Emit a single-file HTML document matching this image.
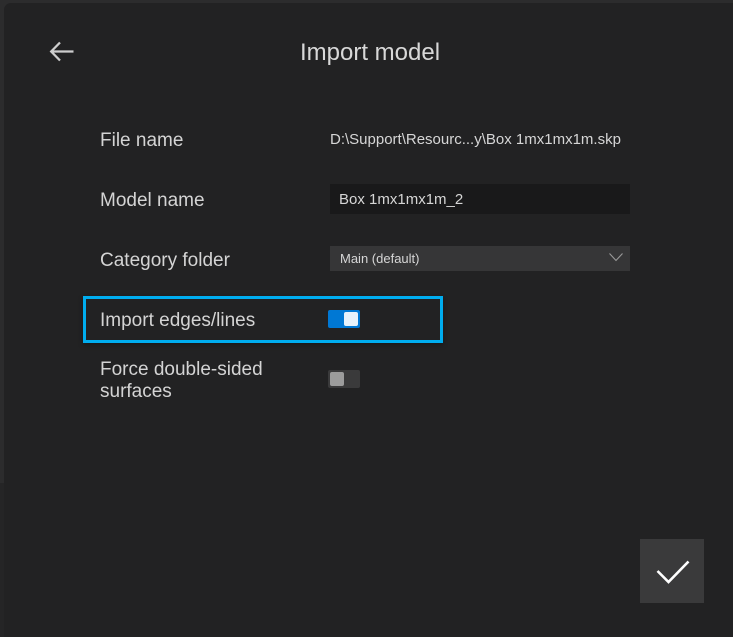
<!DOCTYPE html>
<html>
<head>
<meta charset="utf-8">
<style>
html,body{margin:0;padding:0;}
body{width:733px;height:637px;overflow:hidden;background:#2c2c2d;position:relative;font-family:"Liberation Sans",sans-serif;color:#d6d6d6;}
.panel{position:absolute;left:4px;top:3px;width:729px;height:634px;background:#222223;border-top-left-radius:7px;}
.strip{position:absolute;left:0;top:483px;width:4px;height:154px;background:#252526;}
.t{position:absolute;white-space:nowrap;}
.label{font-size:19px;line-height:22px;left:100px;color:#d4d4d4;}
.input{position:absolute;left:330px;top:184px;width:300px;height:30px;background:#19191a;}
.select{position:absolute;left:330px;top:246px;width:300px;height:25px;background:#363637;}
.focus{position:absolute;left:83px;top:296px;width:354px;height:41px;border:3px solid #00adef;box-shadow:0 2px 5px rgba(0,0,0,.3);}
.sw{position:absolute;left:328px;width:32px;height:18px;border-radius:2px;}
.knob{position:absolute;top:2px;width:14px;height:14px;border-radius:2px;}
.ok{position:absolute;left:640px;top:539px;width:64px;height:64px;background:#3a3a3b;}
svg{position:absolute;display:block;}
</style>
</head>
<body>
<div class="strip"></div>
<div class="panel"></div>

<svg style="left:48px;top:40px" width="28" height="24" viewBox="0 0 28 24">
<path d="M25.5 11.5H4 M12 2.5L3.2 11.5L12 20.5" fill="none" stroke="#cdcdcd" stroke-width="2.3"/>
</svg>
<div class="t" style="left:300px;top:39px;font-size:24px;line-height:28px;color:#d8d8d8;">Import model</div>

<div class="t label" style="top:130px;">File name</div>
<div class="t" style="left:330px;top:131px;font-size:15px;line-height:18px;color:#d6d6d6;">D:\Support\Resourc...y\Box 1mx1mx1m.skp</div>

<div class="t label" style="top:190px;">Model name</div>
<div class="input"></div>
<div class="t" style="left:339px;top:191px;font-size:15px;line-height:18px;color:#d6d6d6;">Box 1mx1mx1m_2</div>

<div class="t label" style="top:250px;">Category folder</div>
<div class="select"></div>
<div class="t" style="left:340px;top:251px;font-size:13px;line-height:16px;color:#d6d6d6;">Main (default)</div>
<svg style="left:608px;top:252px" width="16" height="11" viewBox="0 0 16 11">
<path d="M1.5 1.5L8 8.5L14.5 1.5" fill="none" stroke="#9a9a9a" stroke-width="1.1"/>
</svg>

<div class="focus"></div>
<div class="t label" style="top:310px;">Import edges/lines</div>
<div class="sw" style="top:310px;background:#0078d4;"><div class="knob" style="left:16px;background:#e6f2fb;"></div></div>

<div class="t label" style="top:359px;">Force double-sided<br>surfaces</div>
<div class="sw" style="top:370px;background:#3a3a3b;"><div class="knob" style="left:2px;background:#9c9c9c;"></div></div>

<div class="ok"></div>
<svg style="left:654px;top:557px" width="38" height="30" viewBox="0 0 38 30">
<path d="M3.5 14L14.5 25L34.5 4.5" fill="none" stroke="#ffffff" stroke-width="2.6"/>
</svg>
</body>
</html>
